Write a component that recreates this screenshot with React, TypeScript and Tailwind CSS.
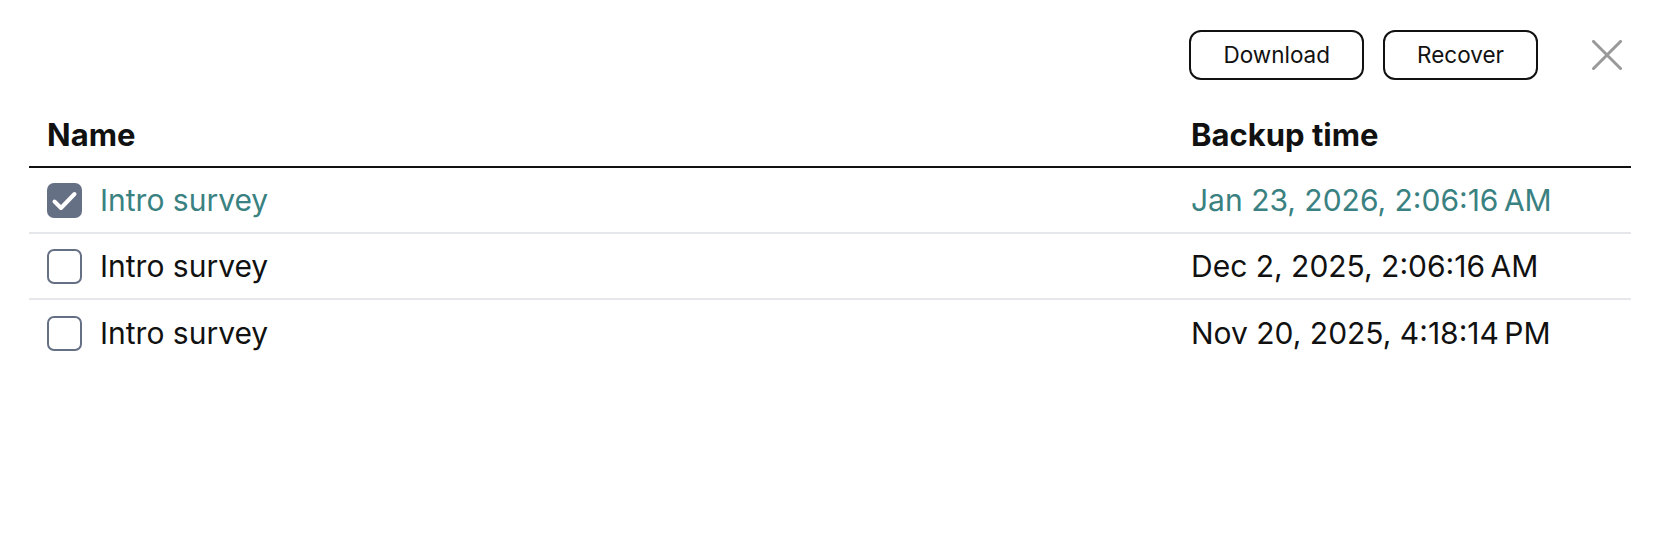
import React from "react";

const rows = [
  { name: "Intro survey", time: "Jan 23, 2026, 2:06:16\u202FAM", checked: true },
  { name: "Intro survey", time: "Dec 2, 2025, 2:06:16\u202FAM", checked: false },
  { name: "Intro survey", time: "Nov 20, 2025, 4:18:14\u202FPM", checked: false },
];

function Checkbox({ checked }: { checked: boolean }) {
  if (checked) {
    return (
      <div className="w-[35px] h-[35px] rounded-[7px] bg-[#667085] shrink-0">
        <svg width="35" height="35" viewBox="0 0 35 35" fill="none">
          <path d="M7.5 18.5L14 25L27.5 11" stroke="white" strokeWidth="4" strokeLinecap="round" strokeLinejoin="round" />
        </svg>
      </div>
    );
  }
  return <div className="w-[35px] h-[35px] rounded-[7px] border-2 border-[#667085] bg-white shrink-0" />;
}

export default function App() {
  return (
    <div
      className="w-[1660px] h-[548px] bg-white text-[#111111]"
      style={{ fontFamily: "Inter, 'Noto Sans', sans-serif" }}
    >
      <div className="flex items-center justify-end pt-[30px] pr-[38px]">
        <button className="h-[50px] px-[32px] rounded-[12px] border-2 border-[#111111] text-[22.5px] text-[#111111] bg-white">
          Download
        </button>
        <button className="ml-[19px] h-[50px] px-[32px] rounded-[12px] border-2 border-[#111111] text-[22.5px] text-[#111111] bg-white">
          Recover
        </button>
        <button className="ml-[54px] w-[30px] h-[30px] flex items-center justify-center">
          <svg width="30" height="30" viewBox="0 0 30 30" fill="none">
            <path d="M1.5 1.5L28.5 28.5M28.5 1.5L1.5 28.5" stroke="#999999" strokeWidth="3" strokeLinecap="square" />
          </svg>
        </button>
      </div>
      <div className="mx-[29px] mt-[25px]">
        <div className="flex items-center h-[63px] border-b-2 border-[#111111] font-bold text-[31px]">
          <div className="w-[1144px] pl-[18px]">Name</div>
          <div className="pl-[18px]">Backup time</div>
        </div>
        {rows.map((r, i) => (
          <div
            key={i}
            className={`flex items-center h-[66px] text-[30px] ${
              i < rows.length - 1 ? "border-b-2 border-[#e5e7eb]" : ""
            } ${r.checked ? "text-[#3a8181]" : "text-[#111111]"}`}
          >
            <div className="w-[1144px] pl-[18px] flex items-center gap-[18px]">
              <Checkbox checked={r.checked} />
              <span>{r.name}</span>
            </div>
            <div className="pl-[18px]">{r.time}</div>
          </div>
        ))}
      </div>
    </div>
  );
}
